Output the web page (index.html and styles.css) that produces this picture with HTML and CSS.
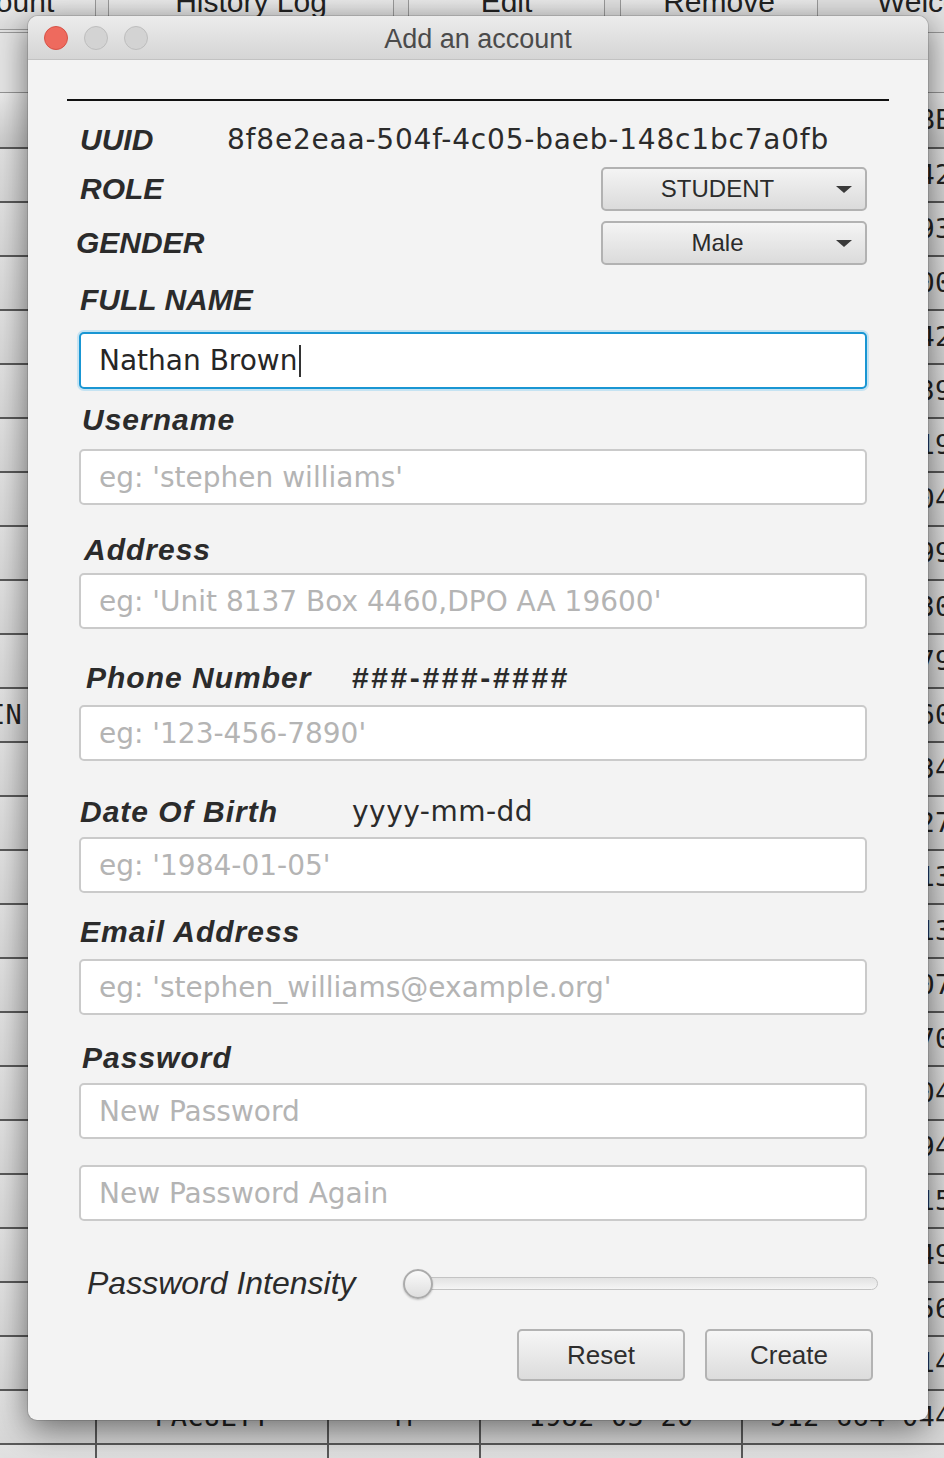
FILE: index.html
```html
<!DOCTYPE html>
<html lang="en">
<head>
<meta charset="utf-8">
<title>Add an account</title>
<link rel="stylesheet" href="styles.css">
</head>
<body>
<div class="app">
  <div class="toolbar">
    <div class="tb-btn tb-add">Add Account</div>
    <div class="tb-btn tb-hist">History Log</div>
    <div class="tb-btn tb-edit">Edit</div>
    <div class="tb-btn tb-remove">Remove</div>
    <div class="tb-welcome">Welcome, admin</div>
  </div>
  <div class="subbar"></div>
  <div class="table">
    <div class="trow thead"><div class="c c1"></div><div class="c c2">ROLE</div><div class="c c3">SEX</div><div class="c c4">BIRTHDAY</div><div class="c c5">PHONE NUMBER</div></div>
    <div class="trow"><div class="c c1"></div><div class="c c2">STUDENT</div><div class="c c3">M</div><div class="c c4">1995-02-11</div><div class="c c5">305-281-7428</div></div>
    <div class="trow"><div class="c c1"></div><div class="c c2">STUDENT</div><div class="c c3">F</div><div class="c c4">1996-07-03</div><div class="c c5">617-440-2935</div></div>
    <div class="trow"><div class="c c1"></div><div class="c c2">FACULTY</div><div class="c c3">M</div><div class="c c4">1978-11-24</div><div class="c c5">212-908-3001</div></div>
    <div class="trow"><div class="c c1"></div><div class="c c2">STUDENT</div><div class="c c3">F</div><div class="c c4">1997-04-19</div><div class="c c5">415-372-6427</div></div>
    <div class="trow"><div class="c c1"></div><div class="c c2">STUDENT</div><div class="c c3">M</div><div class="c c4">1994-09-30</div><div class="c c5">718-655-1392</div></div>
    <div class="trow"><div class="c c1"></div><div class="c c2">FACULTY</div><div class="c c3">F</div><div class="c c4">1981-01-15</div><div class="c c5">503-219-8196</div></div>
    <div class="trow"><div class="c c1"></div><div class="c c2">STUDENT</div><div class="c c3">M</div><div class="c c4">1998-06-07</div><div class="c c5">646-731-5043</div></div>
    <div class="trow"><div class="c c1"></div><div class="c c2">STUDENT</div><div class="c c3">F</div><div class="c c4">1996-12-22</div><div class="c c5">312-584-0990</div></div>
    <div class="trow"><div class="c c1"></div><div class="c c2">FACULTY</div><div class="c c3">M</div><div class="c c4">1975-03-08</div><div class="c c5">202-476-9305</div></div>
    <div class="trow"><div class="c c1"></div><div class="c c2">STUDENT</div><div class="c c3">M</div><div class="c c4">1997-10-14</div><div class="c c5">404-813-2791</div></div>
    <div class="trow"><div class="c c1">ADMIN</div><div class="c c2">ADMIN</div><div class="c c3">F</div><div class="c c4">1988-05-02</div><div class="c c5">702-365-4608</div></div>
    <div class="trow"><div class="c c1"></div><div class="c c2">STUDENT</div><div class="c c3">M</div><div class="c c4">1995-08-26</div><div class="c c5">617-902-1347</div></div>
    <div class="trow"><div class="c c1"></div><div class="c c2">FACULTY</div><div class="c c3">F</div><div class="c c4">1980-02-17</div><div class="c c5">213-648-5270</div></div>
    <div class="trow"><div class="c c1"></div><div class="c c2">STUDENT</div><div class="c c3">M</div><div class="c c4">1999-01-09</div><div class="c c5">305-117-8133</div></div>
    <div class="trow"><div class="c c1"></div><div class="c c2">STUDENT</div><div class="c c3">F</div><div class="c c4">1996-03-28</div><div class="c c5">919-286-4139</div></div>
    <div class="trow"><div class="c c1"></div><div class="c c2">FACULTY</div><div class="c c3">M</div><div class="c c4">1972-07-12</div><div class="c c5">480-753-6072</div></div>
    <div class="trow"><div class="c c1"></div><div class="c c2">STUDENT</div><div class="c c3">F</div><div class="c c4">1997-11-05</div><div class="c c5">206-391-7704</div></div>
    <div class="trow"><div class="c c1"></div><div class="c c2">STUDENT</div><div class="c c3">M</div><div class="c c4">1998-04-21</div><div class="c c5">512-830-2046</div></div>
    <div class="trow"><div class="c c1"></div><div class="c c2">FACULTY</div><div class="c c3">F</div><div class="c c4">1983-09-16</div><div class="c c5">312-679-3948</div></div>
    <div class="trow"><div class="c c1"></div><div class="c c2">STUDENT</div><div class="c c3">M</div><div class="c c4">1995-06-30</div><div class="c c5">615-204-8152</div></div>
    <div class="trow"><div class="c c1"></div><div class="c c2">STUDENT</div><div class="c c3">F</div><div class="c c4">1996-10-04</div><div class="c c5">720-518-6493</div></div>
    <div class="trow"><div class="c c1"></div><div class="c c2">STUDENT</div><div class="c c3">M</div><div class="c c4">1999-12-18</div><div class="c c5">407-962-1561</div></div>
    <div class="trow"><div class="c c1"></div><div class="c c2">FACULTY</div><div class="c c3">F</div><div class="c c4">1979-08-23</div><div class="c c5">303-745-9148</div></div>
    <div class="trow"><div class="c c1"></div><div class="c c2">FACULTY</div><div class="c c3">M</div><div class="c c4">1982-05-20</div><div class="c c5">512-664-0442</div></div>
    <div class="trow"><div class="c c1"></div><div class="c c2"></div><div class="c c3"></div><div class="c c4"></div><div class="c c5"></div></div>
  </div>
</div>

<div class="dialog">
  <div class="titlebar">
    <div class="lights">
      <span class="light red"></span>
      <span class="light grey"></span>
      <span class="light grey"></span>
    </div>
    <div class="title">Add an account</div>
    <div></div>
  </div>
  <div class="body">
    <div class="rule"></div>

    <div class="row-uuid">
      <span class="lbl lbl-uuid">UUID</span>
      <span class="uuid">8f8e2eaa-504f-4c05-baeb-148c1bc7a0fb</span>
    </div>

    <div class="row-sel row-role">
      <span class="lbl">ROLE</span>
      <div class="select"><span class="select-text">STUDENT</span><span class="arrow"></span></div>
    </div>
    <div class="row-sel row-gender">
      <span class="lbl">GENDER</span>
      <div class="select"><span class="select-text">Male</span><span class="arrow"></span></div>
    </div>

    <div class="lbl-row f-fullname"><span class="lbl">FULL NAME</span></div>
    <div class="field focus">Nathan Brown<span class="caret"></span></div>

    <div class="lbl-row f-username"><span class="lbl lbl-mixed">Username</span></div>
    <input class="field i-username" type="text" placeholder="eg: 'stephen williams'">

    <div class="lbl-row f-address"><span class="lbl lbl-mixed">Address</span></div>
    <input class="field i-address" type="text" placeholder="eg: 'Unit 8137 Box 4460,DPO AA 19600'">

    <div class="lbl-row f-phone"><span class="lbl lbl-mixed lbl-wide-phone">Phone Number</span><span class="hint-hash">###-###-####</span></div>
    <input class="field i-phone" type="text" placeholder="eg: '123-456-7890'">

    <div class="lbl-row f-dob"><span class="lbl lbl-mixed lbl-wide-dob">Date Of Birth</span><span class="hint">yyyy-mm-dd</span></div>
    <input class="field i-dob" type="text" placeholder="eg: '1984-01-05'">

    <div class="lbl-row f-email"><span class="lbl lbl-mixed">Email Address</span></div>
    <input class="field i-email" type="text" placeholder="eg: 'stephen_williams@example.org'">

    <div class="lbl-row f-password"><span class="lbl lbl-mixed">Password</span></div>
    <input class="field i-pass1" type="password" placeholder="New Password">
    <input class="field i-pass2" type="password" placeholder="New Password Again">

    <div class="intensity">
      <span class="lbl-plain">Password Intensity</span>
      <div class="slider">
        <div class="track"></div>
        <div class="thumb"></div>
      </div>
    </div>

    <div class="actions">
      <button class="btn" type="button">Reset</button>
      <button class="btn" type="button">Create</button>
    </div>
  </div>
</div>
</body>
</html>
```

FILE: styles.css
```css
html, body {
  margin: 0;
  padding: 0;
}
body {
  width: 944px;
  height: 1458px;
  overflow: hidden;
  position: relative;
  background: #d8d8d8;
  font-family: "Liberation Sans", Arial, sans-serif;
}

/* ---------- background window ---------- */
.app {
  width: 944px;
  height: 1458px;
  overflow: hidden;
}
.toolbar {
  height: 32px;
  border-bottom: 1px solid #9a9a9a;
  background: #e3e3e3;
  display: flex;
  align-items: flex-start;
}
.tb-btn {
  flex: none;
  box-sizing: border-box;
  height: 50px;
  margin-top: -20px;
  border: 1px solid #9c9c9c;
  border-radius: 5px;
  background: linear-gradient(#f7f7f7, #dcdcdc);
  color: #222;
  font-size: 30px;
  line-height: 42px;
  text-align: center;
  white-space: nowrap;
}
.tb-add { margin-left: -156px; width: 252px; }
.tb-hist { margin-left: 12px; width: 286px; }
.tb-edit { margin-left: 14px; width: 197px; }
.tb-remove { margin-left: 15px; width: 198px; }
.tb-welcome {
  flex: none;
  margin-left: 59px;
  margin-top: -19px;
  font-size: 30px;
  line-height: 42px;
  color: #222;
  white-space: nowrap;
}
.subbar {
  height: 59px;
  border-bottom: 1px solid #959595;
  background: #e6e6e6;
}
.trow {
  display: grid;
  grid-template-columns: 95px 232px 152px 262px 260px;
  height: 52px;
  border-bottom: 2px solid #5a5a5a;
  background: linear-gradient(#e3e3e3, #d7d7d7);
  font-family: "DejaVu Sans Mono", "Liberation Mono", monospace;
  font-size: 27px;
  letter-spacing: 0.25px;
  line-height: 52px;
  color: #222;
}
.thead {
  height: 54px;
  line-height: 54px;
  background: linear-gradient(#ededed, #cbcbcb);
}
.c {
  white-space: nowrap;
  min-width: 0;
}
.c1 {
  display: flex;
  justify-content: flex-end;
  padding-right: 73px;
}
.c2, .c3, .c4 {
  border-left: 2px solid #5a5a5a;
  text-align: center;
}
.c5 {
  border-left: 2px solid #5a5a5a;
  padding-left: 27px;
}

/* ---------- dialog ---------- */
.dialog {
  position: absolute;
  left: 28px;
  top: 16px;
  width: 900px;
  height: 1404px;
  border-radius: 10px 10px 9px 9px;
  overflow: hidden;
  background: #f3f3f3;
  box-shadow: 0 8px 34px rgba(0, 0, 0, 0.55), 0 0 0 1px rgba(0, 0, 0, 0.12);
  display: flex;
  flex-direction: column;
}
.titlebar {
  flex: none;
  height: 44px;
  box-sizing: border-box;
  border-bottom: 1px solid #c2c2c2;
  background: linear-gradient(#ececec, #d5d5d5);
  display: grid;
  grid-template-columns: 1fr auto 1fr;
  align-items: center;
}
.lights {
  display: flex;
  gap: 16px;
  padding-left: 16px;
  padding-top: 1px;
}
.light {
  width: 24px;
  height: 24px;
  border-radius: 50%;
  box-sizing: border-box;
}
.light.red {
  background: #ee6a5e;
  border: 1px solid #d65247;
}
.light.grey {
  background: #d3d3d3;
  border: 1px solid #bdbdbd;
}
.title {
  font-size: 27px;
  color: #4b4b4b;
  padding-top: 3px;
}

.body {
  flex: 1;
  display: flex;
  flex-direction: column;
}
.rule {
  height: 2px;
  margin: 39px 39px 0 39px;
  background: #111;
}

.lbl {
  font-weight: bold;
  font-style: italic;
  font-size: 30px;
  color: #2b2b2b;
  white-space: nowrap;
}
.lbl-mixed {
  letter-spacing: 1px;
}
.row-uuid {
  margin-top: 19px;
  height: 40px;
  line-height: 40px;
  display: flex;
  padding-left: 52px;
}
.lbl-uuid {
  width: 147px;
  flex: none;
}
.uuid {
  font-family: "DejaVu Sans", sans-serif;
  font-size: 28px;
  letter-spacing: 0.8px;
  color: #2b2b2b;
  white-space: nowrap;
}

.row-sel {
  height: 44px;
  line-height: 44px;
  display: flex;
  align-items: center;
}
.row-role { margin-top: 7px; padding-left: 52px; }
.row-gender { margin-top: 10px; padding-left: 48px; }
.select {
  margin-left: auto;
  margin-right: 61px;
  width: 266px;
  height: 44px;
  box-sizing: border-box;
  border: 2px solid #b2b2b2;
  border-radius: 5px;
  background: linear-gradient(#f4f4f4, #dbdbdb);
  display: flex;
  align-items: center;
  padding-right: 13px;
}
.select-text {
  flex: 1;
  text-align: center;
  font-size: 24px;
  line-height: 40px;
  color: #2b2b2b;
}
.arrow {
  width: 0;
  height: 0;
  margin-left: 4px;
  border-left: 8px solid transparent;
  border-right: 8px solid transparent;
  border-top: 7px solid #3a3a3a;
}

.lbl-row {
  height: 40px;
  line-height: 40px;
  display: flex;
  align-items: center;
}
.f-fullname { margin-top: 15px; padding-left: 52px; }
.f-username { margin-top: 11px; padding-left: 54px; }
.f-address { margin-top: 25px; padding-left: 56px; }
.f-phone { margin-top: 29px; padding-left: 58px; }
.f-dob { margin-top: 31px; padding-left: 52px; }
.f-email { margin-top: 19px; padding-left: 52px; }
.f-password { margin-top: 23px; padding-left: 54px; }

.lbl-wide-phone { width: 266px; flex: none; }
.lbl-wide-dob { width: 272px; flex: none; }
.hint-hash {
  font-family: "Liberation Sans", Arial, sans-serif;
  font-weight: bold;
  font-size: 30px;
  letter-spacing: 2.6px;
  color: #2b2b2b;
}
.hint {
  font-family: "DejaVu Sans", sans-serif;
  font-size: 28px;
  letter-spacing: 0.5px;
  color: #2b2b2b;
}

.field {
  display: flex;
  align-items: center;
  box-sizing: border-box;
  margin: 0 0 0 51px;
  width: 788px;
  height: 56px;
  border: 2px solid #cacaca;
  border-radius: 5px;
  background: #fff;
  padding: 0 0 0 18px;
  font-family: "DejaVu Sans", sans-serif;
  font-size: 28px;
  color: #262626;
  outline: none;
}
.field::placeholder {
  color: #b4b4b4;
  opacity: 1;
}
.field.focus {
  margin-top: 12px;
  height: 57px;
  border-color: #1996d3;
  box-shadow: 0 0 0 2px #c5e3f2;
}
.caret {
  display: inline-block;
  width: 0;
  height: 32px;
  margin-left: 1px;
  border-left: 2px solid #333;
}
.i-username { margin-top: 9px; }
.i-address { margin-top: 3px; }
.i-phone { margin-top: 7px; }
.i-dob { margin-top: 5px; }
.i-email { margin-top: 7px; }
.i-pass1 { margin-top: 5px; }
.i-pass2 { margin-top: 26px; }

.intensity {
  margin-top: 42px;
  height: 40px;
  display: flex;
  align-items: center;
}
.lbl-plain {
  flex: none;
  box-sizing: border-box;
  width: 375px;
  padding-left: 59px;
  font-style: italic;
  font-size: 32px;
  color: #2b2b2b;
  white-space: nowrap;
}
.slider {
  position: relative;
  width: 475px;
  height: 40px;
  display: flex;
  align-items: center;
}
.track {
  margin-left: 1px;
  width: 474px;
  height: 13px;
  box-sizing: border-box;
  border: 1px solid #c3c3c3;
  border-radius: 7px;
  background: linear-gradient(#e2e2e2, #f5f5f5);
}
.thumb {
  position: absolute;
  left: 0;
  top: 6px;
  width: 30px;
  height: 30px;
  box-sizing: border-box;
  border-radius: 50%;
  border: 2px solid #ababab;
  background: linear-gradient(#fafafa, #dedede);
  box-shadow: 0 1px 2px rgba(0, 0, 0, 0.2);
}

.actions {
  margin-top: 26px;
  display: flex;
  justify-content: flex-end;
  gap: 20px;
  padding-right: 55px;
}
.btn {
  width: 168px;
  height: 52px;
  box-sizing: border-box;
  border: 2px solid #b3b3b3;
  border-radius: 5px;
  background: linear-gradient(#f6f6f6, #dcdcdc);
  font-family: "Liberation Sans", Arial, sans-serif;
  font-size: 26px;
  color: #2e2e2e;
  padding: 0;
}
```
